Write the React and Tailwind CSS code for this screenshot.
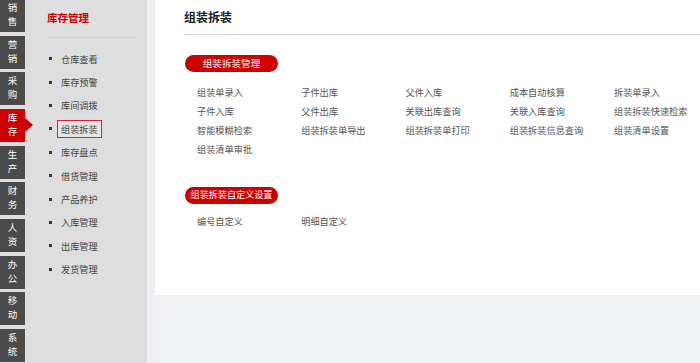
const navTiles = [
  ["销", "售"],
  ["营", "销"],
  ["采", "购"],
  ["库", "存"],
  ["生", "产"],
  ["财", "务"],
  ["人", "资"],
  ["办", "公"],
  ["移", "动"],
  ["系", "统"],
];

const menuItems = [
  "仓库查看",
  "库存预警",
  "库间调拨",
  "组装拆装",
  "库存盘点",
  "借货管理",
  "产品养护",
  "入库管理",
  "出库管理",
  "发货管理",
];

const manageLinks = [
  "组装单录入",
  "子件出库",
  "父件入库",
  "成本自动核算",
  "拆装单录入",
  "子件入库",
  "父件出库",
  "关联出库查询",
  "关联入库查询",
  "组装拆装快速检索",
  "智能模糊检索",
  "组装拆装单导出",
  "组装拆装单打印",
  "组装拆装信息查询",
  "组装清单设置",
  "组装清单审批",
];

const customLinks = ["编号自定义", "明细自定义"];

const font = { fontFamily: '"Noto Sans CJK SC", "Noto Sans", sans-serif' };

const App = () => {
  return (
    <div
      className="flex w-[700px] h-[363px] overflow-hidden bg-[#f0f1f3]"
      style={font}
    >
      {/* top-level module strip */}
      <div className="w-[25px] shrink-0 bg-[#dedede] flex flex-col gap-[3.67px] -mt-[1px]">
        {navTiles.map(([a, b], i) => (
          <div
            key={i}
            className={`relative h-[33px] shrink-0 flex flex-col items-center justify-center text-[9.5px] leading-[14px] text-white pb-[3px] ${
              i === 3 ? "bg-[#cc0000]" : "bg-[#4a4a4a]"
            }`}
          >
            <span>{a}</span>
            <span>{b}</span>
            {i === 3 && (
              <span className="absolute left-full top-[9px] w-0 h-0 border-l-[8px] border-l-[#cc0000] border-y-[7px] border-y-transparent" />
            )}
          </div>
        ))}
      </div>

      {/* secondary menu */}
      <div className="w-[122px] shrink-0 bg-[#dedede] pl-[22px] pr-[10px]">
        <div className="h-[38px] flex items-center border-b border-[#cfcfcf] text-[10.5px] font-bold text-[#cc0000] pb-[1px]">
          库存管理
        </div>
        <ul className="pt-[9px]">
          {menuItems.map((item, i) => (
            <li key={item} className="h-[23.4px] flex items-center">
              <span className="w-[3px] h-[3px] bg-[#333] ml-[2px] mr-[9px]" />
              <span
                className={`text-[9.2px] leading-[12px] text-[#444] ${
                  i === 3
                    ? "-ml-[4px] px-[3px] py-[2px] border-[1.5px] border-[#e0202a] bg-[#e6e6e6]"
                    : ""
                }`}
              >
                {item}
              </span>
            </li>
          ))}
        </ul>
      </div>

      <div className="w-[8px] shrink-0 bg-[#eef0f3]" />

      {/* content */}
      <div className="flex-1 self-start h-[295px] bg-white">
        <div className="ml-[29px] h-[35px] flex items-center border-b border-[#d6d6d6] text-[12px] font-bold text-[#222]">
          组装拆装
        </div>

        <div className="pl-[30px]">
          <div className="mt-[20px] w-[93px] h-[17px] rounded-full bg-[#cc0000] flex items-center justify-center text-[9.6px] text-white">
            组装拆装管理
          </div>
          <div className="mt-[11px] pl-[12px] grid grid-cols-[repeat(5,104.25px)] auto-rows-[19.2px]">
            {manageLinks.map((t) => (
              <div key={t} className="flex items-center text-[9.2px] text-[#555]">
                {t}
              </div>
            ))}
          </div>

          <div className="mt-[27px] w-[93px] h-[17px] rounded-full bg-[#cc0000] flex items-center justify-center text-[9.1px] text-white">
            组装拆装自定义设置
          </div>
          <div className="mt-[9px] pl-[12px] grid grid-cols-[repeat(5,104.25px)] auto-rows-[19.2px]">
            {customLinks.map((t) => (
              <div key={t} className="flex items-center text-[9.2px] text-[#555]">
                {t}
              </div>
            ))}
          </div>
        </div>
      </div>
    </div>
  );
};

export default App;
